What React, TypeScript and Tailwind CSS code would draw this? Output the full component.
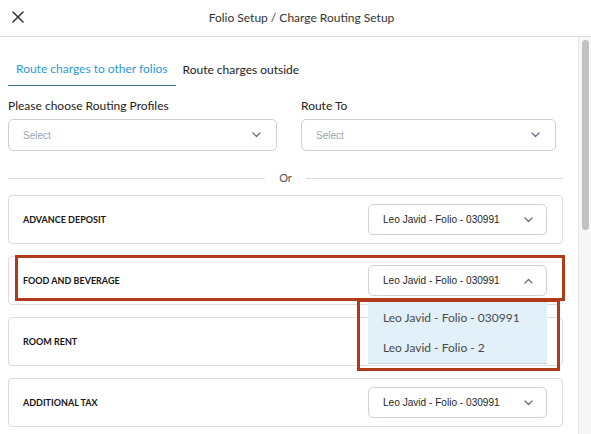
import React from "react";

const lato = { fontFamily: "Lato, 'Open Sans', sans-serif" };
const sans = { fontFamily: "'Liberation Sans', Arial, sans-serif" };

function Chevron({ up = false }: { up?: boolean }) {
  return (
    <svg width="9" height="6" viewBox="0 0 9 6" fill="none" className="shrink-0">
      <path
        d={up ? "M1 5 L4.5 1.5 L8 5" : "M1 1 L4.5 4.5 L8 1"}
        stroke="#5b6b82"
        strokeWidth="1.2"
        strokeLinecap="round"
        strokeLinejoin="round"
      />
    </svg>
  );
}

function FolioSelect({ value, open = false }: { value: string; open?: boolean }) {
  return (
    <div className="relative">
      <div className="flex h-[31px] w-[179px] items-center justify-between rounded-[5px] border border-[#cdd3db] bg-white pl-[14px] pr-[13px]">
        <span className="text-[10.1px] text-[#1f1f1f]" style={sans}>
          {value}
        </span>
        <Chevron up={open} />
      </div>
      {open && (
        <div
          className="absolute left-0 top-[37px] z-10 flex h-[62px] w-[179px] flex-col border-b border-[#c9d3dc] bg-[#e2f0f9] pl-[15px] text-[12px] text-[#4a4a4a]"
          style={lato}
        >
          <div className="flex h-[31px] items-center pt-[1px]">Leo Javid - Folio - 030991</div>
          <div className="flex h-[31px] items-center pt-[1px]">Leo Javid - Folio - 2</div>
        </div>
      )}
    </div>
  );
}

function ChargeRow({ label, open = false }: { label: string; open?: boolean }) {
  return (
    <div className="flex h-[49px] w-[555px] items-center justify-between rounded-[4px] border border-[#dcdcdc] bg-white pl-[14px] pr-[15px]">
      <span className="text-[9px] font-bold text-[#151515]" style={lato}>
        {label}
      </span>
      <FolioSelect value="Leo Javid - Folio - 030991" open={open} />
    </div>
  );
}

function PlaceholderSelect({ width }: { width: string }) {
  return (
    <div
      className={`flex h-[32px] items-center justify-between rounded-[5px] border border-[#cad1da] bg-white pl-[14px] pr-[15px] ${width}`}
    >
      <span className="text-[10px] text-[#9ba5b2]" style={sans}>
        Select
      </span>
      <Chevron />
    </div>
  );
}

export default function App() {
  return (
    <div className="relative flex h-[434px] w-[591px] flex-col overflow-hidden bg-white" style={lato}>
      {/* header */}
      <div className="flex h-[37px] shrink-0 items-center border-b border-[#dedede] px-[12px]">
        <svg width="12" height="12" viewBox="0 0 12 12" className="mb-[3px] shrink-0">
          <path d="M1 1 L11 11 M11 1 L1 11" stroke="#2e3338" strokeWidth="1.5" strokeLinecap="round" />
        </svg>
        <div className="flex flex-1 justify-center text-[12px] text-[#333]">
          Folio Setup / Charge Routing Setup
        </div>
      </div>

      <div className="flex min-h-0 flex-1">
        {/* content */}
        <div className="flex w-[578px] flex-col pl-[8px]">
          <div className="mt-[16px] flex text-[12px]">
            <div className="flex h-[33px] items-center border-b border-[#3a6f9c] px-[8px] text-[#2a9ad6]">
              Route charges to other folios
            </div>
            <div className="flex h-[33px] items-center px-[7px] text-[#1d1d1d]">Route charges outside</div>
          </div>

          <div className="mt-[12px] flex">
            <div className="flex w-[269px] flex-col">
              <div className="h-[16px] text-[12px] leading-[16px] text-[#222]">Please choose Routing Profiles</div>
              <div className="mt-[5px]">
                <PlaceholderSelect width="w-[269px]" />
              </div>
            </div>
            <div className="ml-[24px] flex w-[255px] flex-col">
              <div className="h-[16px] text-[12px] leading-[16px] text-[#222]">Route To</div>
              <div className="mt-[5px]">
                <PlaceholderSelect width="w-[255px]" />
              </div>
            </div>
          </div>

          <div className="mt-[20px] flex h-[14px] w-[555px] items-center">
            <div className="h-px flex-1 bg-[#d9dce4]" />
            <span className="px-[14px] text-[11px] leading-[14px] text-[#555]">Or</span>
            <div className="h-px flex-1 bg-[#d9dce4]" />
          </div>

          <div className="mt-[10px] flex flex-col gap-[12px]">
            <ChargeRow label="ADVANCE DEPOSIT" />
            <ChargeRow label="FOOD AND BEVERAGE" open />
            <ChargeRow label="ROOM RENT" />
            <ChargeRow label="ADDITIONAL TAX" />
          </div>
        </div>

        {/* scrollbar */}
        <div className="flex w-[13px] justify-center border-l border-[#e6e6e6] bg-[#f7f7f7] pt-[3px]">
          <div className="h-[190px] w-[7px] rounded-full bg-[#c1c1c1]" />
        </div>
      </div>

      {/* highlight boxes */}
      <div className="pointer-events-none absolute left-[15px] top-[255px] z-20 h-[46px] w-[550px] border-[3px] border-[#b13a1b]" />
      <div className="pointer-events-none absolute left-[357px] top-[299px] z-20 h-[72px] w-[203px] border-[3px] border-[#b13a1b]" />
    </div>
  );
}
